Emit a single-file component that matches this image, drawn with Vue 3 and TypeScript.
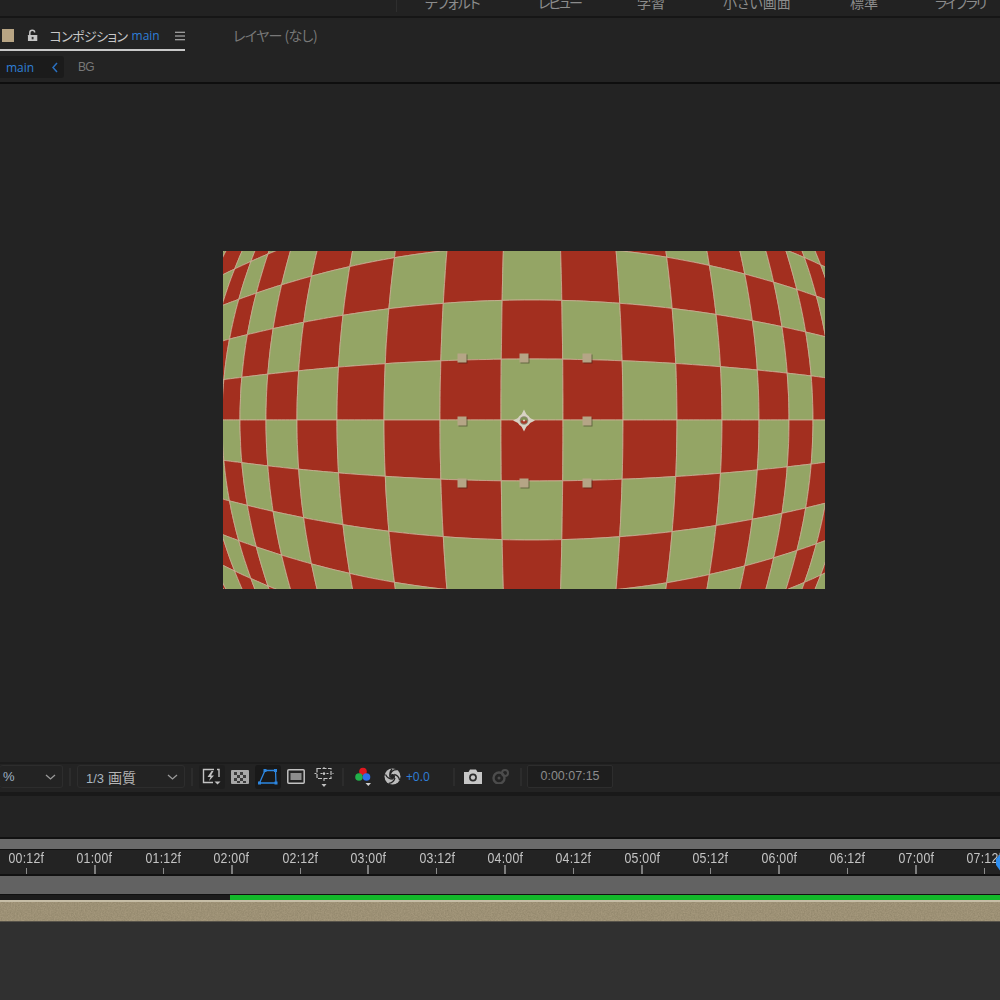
<template>
  <div class="app">
    <div class="workspaces">
      <div
        v-for="t in workspaces"
        :key="t.label"
        class="ws-item"
        :style="{ width: t.w + 'px', letterSpacing: t.ls + 'px' }"
      >{{ t.label }}</div>
    </div>
    <div class="rule"></div>

    <div class="tabs">
      <div class="tab active">
        <span class="swatch"></span>
        <svg class="lock" width="12" height="13" viewBox="0 0 12 13">
          <path d="M3 6V3.600C3 2 4.200 1 5.600 1S8.200 2 8.200 3.400" fill="none" stroke="#c4c4c4" stroke-width="1.600" />
          <rect x="1" y="6" width="10" height="6.500" rx="0.500" fill="#c4c4c4" />
          <rect x="5" y="8" width="2" height="2.600" fill="#333" />
        </svg>
        <span class="tab-name">コンポジション</span>
        <span class="tab-comp">main</span>
        <svg class="burger" width="11" height="10" viewBox="0 0 11 10">
          <path d="M0 1h11M0 5h11M0 9h11" stroke="#c4c4c4" stroke-width="1.300" />
        </svg>
      </div>
      <div class="tab-layer">レイヤー (なし)</div>
    </div>

    <div class="crumbs">
      <div class="crumb-box">
        <span class="crumb-main">main</span>
        <svg width="6" height="11" viewBox="0 0 6 11">
          <path d="M5 1 1 5.500 5 10" fill="none" stroke="#2a70c0" stroke-width="1.500" />
        </svg>
      </div>
      <span class="crumb-bg">BG</span>
    </div>
    <div class="rule thin"></div>

    <div class="viewer">
      <svg class="comp" width="602" height="338" viewBox="223 251 602 338">
        <g class="soft">
          <polygon
            v-for="c in cells"
            :key="c.id"
            :points="c.points"
            :fill="c.fill"
            stroke="#cdb095"
            stroke-width="0.800"
          />
        </g>
        <rect
          v-for="h in handles"
          :key="h[0] + '-' + h[1]"
          class="handle"
          :x="h[0] - 4.500"
          :y="h[1] - 4.500"
          width="9"
          height="9"
        />
        <g transform="translate(524 420.500)">
          <path d="M0-11 3-5H-3ZM0 11 3 5H-3ZM-11 0-5 3V-3ZM11 0 5 3V-3Z" fill="#d8d2c4" />
          <circle r="6.500" fill="#d8d2c4" />
          <circle r="4.300" fill="#8d8a74" />
          <path d="M-3.200 0a3.200 3.200 0 0 1 6.400 0Z" fill="#7f9352" />
          <path d="M-3.200 0a3.200 3.200 0 0 0 6.400 0Z" fill="#a83a28" />
          <circle r="1" fill="#e6ded0" />
        </g>
      </svg>
    </div>

    <div class="toolbar">
      <div class="select select-zoom">
        <span class="zoom-pct">%</span>
        <svg class="chev" width="11" height="6" viewBox="0 0 11 6"><path d="M1 1 5.500 5 10 1" fill="none" stroke="#9a9a9a" stroke-width="1.300" /></svg>
      </div>
      <span class="sep"></span>
      <div class="select select-quality">
        <span class="quality"><span class="frac">1/3</span> 画質</span>
        <svg class="chev" width="11" height="6" viewBox="0 0 11 6"><path d="M1 1 5.500 5 10 1" fill="none" stroke="#9a9a9a" stroke-width="1.300" /></svg>
      </div>
      <span class="sep"></span>

      <div class="btn btn-first">
        <svg width="20" height="18" viewBox="0 0 20 18">
          <path d="M12 1.500H1.500v13H11M17 9V1.500h-2" fill="none" stroke="#c2c2c2" stroke-width="1.400" />
          <path d="M9.500 3 5.500 9h3l-1.500 4 5-5.500H9L11.500 3Z" fill="#c2c2c2" />
          <path d="M12.500 13.500h6l-3 3Z" fill="#c2c2c2" />
        </svg>
      </div>
      <div class="btn">
        <svg width="18" height="14" viewBox="0 0 18 14">
          <rect width="18" height="14" rx="1" fill="#a8a8a8" />
          <path d="M3 2h3v3H3zM9 2h3v3H9zM6 5h3v3H6zM12 5h3v3h-3zM3 8h3v3H3zM9 8h3v3H9zM6 11h3v2H6zM12 11h3v2h-3z" fill="#3c3c3c" />
        </svg>
      </div>
      <div class="btn active">
        <svg width="20" height="18" viewBox="0 0 20 18">
          <path d="M7 2.500h10.500L18 15H1.500Z" fill="none" stroke="#2d86e0" stroke-width="1.300" />
          <path d="M5.500 1h3v3h-3zM16 1h3v3h-3zM16.500 13.500h3v3h-3zM0 13.500h3v3H0z" fill="#2d86e0" />
        </svg>
      </div>
      <div class="btn">
        <svg width="18" height="15" viewBox="0 0 18 15">
          <rect x="0.800" y="0.800" width="16.400" height="13.400" rx="1" fill="none" stroke="#c2c2c2" stroke-width="1.500" />
          <rect x="3.500" y="4" width="11" height="7" fill="#8e8e8e" />
        </svg>
      </div>
      <div class="btn">
        <svg width="20" height="22" viewBox="0 0 20 22">
          <path d="M3 2.500h14v10H3Z" fill="none" stroke="#c2c2c2" stroke-width="1.200" stroke-dasharray="4 1.500" />
          <path d="M10 1v14M0.500 7.500h19" stroke="#c2c2c2" stroke-width="1.100" stroke-dasharray="2 4" />
          <circle cx="10" cy="7.500" r="1.200" fill="#c2c2c2" />
          <path d="M7.500 18h5L10 21Z" fill="#c2c2c2" />
        </svg>
      </div>
      <span class="sep sep-a"></span>

      <div class="btn btn-rgb">
        <svg width="18" height="20" viewBox="0 0 18 20">
          <circle cx="8" cy="4.500" r="3.800" fill="#e0171f" />
          <circle cx="4" cy="10" r="3.800" fill="#22b04a" />
          <circle cx="11.500" cy="10" r="3.800" fill="#2f6fe8" />
          <path d="M10.500 16h5.500l-2.700 3Z" fill="#d0d0d0" />
        </svg>
      </div>
      <div class="btn">
        <svg width="17" height="17" viewBox="0 0 17 17">
          <circle cx="8.500" cy="8.500" r="8" fill="#bcbcbc" />
          <path d="M6.200 6.800C7 3.500 9.500 1.500 13 1.600M10.200 6.500C13 7 15 9.500 15.600 12M11 10C10 13 8 15 4.800 15.400M8.800 11.200C6 11.200 3 9.500 1.500 6.500M6 9.500C5.500 7 6 3.500 8 1" fill="none" stroke="#232323" stroke-width="1.300" />
          <circle cx="8.500" cy="8.500" r="2.500" fill="#232323" />
        </svg>
      </div>
      <span class="exposure">+0.0</span>
      <span class="sep sep-b"></span>

      <div class="btn btn-cam">
        <svg width="18" height="15" viewBox="0 0 18 15">
          <path d="M0 3h4.500L6 .5h6L13.500 3H18v12H0Z" fill="#c6c6c6" />
          <circle cx="9" cy="8.500" r="3.900" fill="#2a2a2a" />
          <circle cx="9" cy="8.500" r="2.200" fill="#c6c6c6" />
        </svg>
      </div>
      <div class="btn">
        <svg width="18" height="15" viewBox="0 0 18 15">
          <circle cx="7" cy="9" r="5.500" fill="none" stroke="#4c4c4c" stroke-width="2.400" />
          <circle cx="13" cy="4" r="3" fill="none" stroke="#4c4c4c" stroke-width="2" />
          <circle cx="7" cy="9" r="1.500" fill="#4c4c4c" />
        </svg>
      </div>
      <span class="sep sep-c"></span>
      <div class="timecode">0:00:07:15</div>
    </div>
    <div class="toolbar-foot"></div>

    <div class="spacer"></div>

    <div class="timeline">
      <div class="work-area"></div>
      <div class="ruler">
        <div v-for="m in marks" :key="m.label" class="mark">
          <span class="mark-label">{{ m.label }}</span>
          <span class="tick" :class="{ major: m.major }"></span>
        </div>
        <svg class="playhead" width="8" height="20" viewBox="0 0 8 20">
          <path d="M5 0 0 6v6l5 7h3V0Z" fill="#2f8ff0" />
        </svg>
      </div>
      <div class="nav-bar"></div>
      <div class="cache">
        <div class="cache-off"></div>
        <div class="cache-on"></div>
      </div>
      <div class="layer-bar">
        <svg class="grain" width="1000" height="19">
          <filter id="grain">
            <feTurbulence type="fractalNoise" baseFrequency="0.7" numOctaves="2" seed="4" />
            <feColorMatrix values="0 0 0 0 0.2  0 0 0 0 0.17  0 0 0 0 0.1  0 0 0 0.7 -0.15" />
          </filter>
          <rect width="1000" height="19" filter="url(#grain)" />
        </svg>
      </div>
    </div>
  </div>
</template>

<script setup lang="ts">
import { computed } from 'vue'

const workspaces = [
  { label: 'デフォルト', w: 114, ls: -1 },
  { label: 'レビュー', w: 99, ls: -2 },
  { label: '学習', w: 86, ls: 0 },
  { label: '小さい画面', w: 127, ls: 0 },
  { label: '標準', w: 85, ls: 0 },
  { label: 'ライブラリ', w: 100, ls: -2 },
]

// grid lines where they cross the middle of the picture, before the bulge
const xs = [160, 182, 205, 222, 240, 266, 297, 337, 384, 440, 501, 563, 623, 677, 722, 759, 789, 813, 833, 850, 865, 880]
const ys = [-318, -290, -258, -221, -174, -120, -61, 0, 61, 120, 174, 221, 258, 290, 318]
const CX = 532
const CY = 420
const MID_COL = xs.indexOf(501)
const MID_ROW = ys.indexOf(0)

function warp(x0: number, y0: number): [number, number] {
  const dx0 = x0 - CX
  const c = 0.075 + 0.04 * (Math.abs(dx0) / 330) ** 4
  let dx = dx0
  let dy = y0
  for (let k = 0; k < 3; k++) {
    dy = y0 * (1 - 0.34 * (dx / 309) ** 2)
    dx = dx0 * (1 - c * (dy / 169) ** 2)
  }
  return [CX + dx, CY + dy]
}

function edge(x1: number, y1: number, x2: number, y2: number): string[] {
  const pts: string[] = []
  for (let s = 0; s < 8; s++) {
    const t = s / 8
    const p = warp(x1 + (x2 - x1) * t, y1 + (y2 - y1) * t)
    pts.push(p[0].toFixed(1) + ',' + p[1].toFixed(1))
  }
  return pts
}

const cells = computed(() => {
  const out: { id: string; points: string; fill: string }[] = []
  for (let i = 0; i < xs.length - 1; i++) {
    for (let j = 0; j < ys.length - 1; j++) {
      const x1 = xs[i], x2 = xs[i + 1], y1 = ys[j], y2 = ys[j + 1]
      const points = [
        ...edge(x1, y1, x2, y1),
        ...edge(x2, y1, x2, y2),
        ...edge(x2, y2, x1, y2),
        ...edge(x1, y2, x1, y1),
      ].join(' ')
      const odd = Math.abs(i - MID_COL + (j - MID_ROW)) % 2 === 1
      out.push({ id: i + '-' + j, points, fill: odd ? '#94a565' : '#a32f1f' })
    }
  }
  return out
})

const handles = [
  [462, 358], [524, 358], [587, 358],
  [462, 421], [587, 421],
  [462, 483], [524, 483], [587, 483],
]

const marks = computed(() => {
  const out: { label: string; major: boolean }[] = []
  for (let n = 1; n <= 15; n++) {
    const sec = Math.floor(n / 2)
    const half = n % 2 === 1
    out.push({ label: '0' + sec + ':' + (half ? '12' : '00') + 'f', major: !half })
  }
  return out
})
</script>

<style>
html,
body {
  margin: 0;
  background: #232323;
}
</style>

<style scoped>
.app {
  width: 1000px;
  height: 1000px;
  overflow: hidden;
  display: flex;
  flex-direction: column;
  background: #232323;
  font-family: "Liberation Sans", "Noto Sans CJK JP", sans-serif;
}

.workspaces {
  height: 16px;
  flex: none;
  display: flex;
  padding-left: 396px;
  overflow: hidden;
  background: #222;
}

.ws-item {
  height: 20px;
  margin-top: -8px;
  flex: none;
  line-height: 20px;
  font-size: 14px;
  font-feature-settings: "palt";
  color: #8c8c8c;
  padding-left: 28px;
  box-sizing: border-box;
  font-family: "Noto Sans CJK JP", sans-serif;
  white-space: nowrap;
}

.ws-item:first-child {
  border-left: 1px solid #2e2e2e;
}

.rule {
  height: 2px;
  flex: none;
  background: #161616;
}

.rule.thin {
  background: #0e0e0e;
}

.tabs {
  height: 34px;
  flex: none;
  display: flex;
}

.tab {
  width: 185px;
  height: 33px;
  box-sizing: border-box;
  display: flex;
  align-items: center;
  padding: 4px 0 0 2px;
  border-bottom: 2px solid #c8c8c8;
}

.swatch {
  width: 13px;
  height: 13px;
  background: #b8a584;
}

.lock {
  margin-left: 13px;
}

.tab-name {
  width: 79px;
  margin-left: 11px;
  font-family: "Noto Sans CJK JP", sans-serif;
  font-size: 13px;
  letter-spacing: -0.6px;
  font-feature-settings: "palt";
  color: #c8c8c8;
  white-space: nowrap;
}

.tab-comp {
  margin-left: 4px;
  font-family: "Open Sans", sans-serif;
  font-size: 12px;
  color: #2f7fd8;
}

.burger {
  margin-left: 15px;
}

.tab-layer {
  margin-left: 48px;
  height: 33px;
  padding-top: 3px;
  box-sizing: border-box;
  line-height: 29px;
  font-family: "Noto Sans CJK JP", sans-serif;
  font-size: 14px;
  letter-spacing: -0.6px;
  font-feature-settings: "palt";
  color: #787878;
}

.crumbs {
  height: 30px;
  flex: none;
  display: flex;
  align-items: center;
}

.crumb-box {
  width: 64px;
  height: 22px;
  box-sizing: border-box;
  padding: 0 6px;
  background: #1b1b1b;
  border-radius: 0 3px 3px 0;
  display: flex;
  align-items: center;
  justify-content: space-between;
}

.crumb-main {
  font-family: "Open Sans", sans-serif;
  font-size: 12px;
  color: #2f7fd8;
}

.crumb-bg {
  margin-left: 14px;
  font-size: 12px;
  letter-spacing: -0.8px;
  color: #787878;
}

.viewer {
  height: 678px;
  flex: none;
  box-sizing: border-box;
  padding: 167px 0 0 223px;
}

.comp {
  display: block;
}

.soft {
  filter: blur(0.4px);
}

.handle {
  fill: #b5a586;
  filter: drop-shadow(1px 1px 0 rgba(40, 30, 20, 0.45));
}

.toolbar {
  height: 25px;
  padding-bottom: 3px;
  flex: none;
  display: flex;
  align-items: center;
  border-top: 2px solid #1c1c1c;
  background: #232323;
}

.toolbar-foot {
  height: 4px;
  flex: none;
  background: #191919;
}

.select {
  height: 23px;
  box-sizing: border-box;
  border: 1px solid #2d2d2d;
  border-radius: 3px;
  display: flex;
  align-items: center;
  justify-content: space-between;
  flex: none;
}

.select-zoom {
  width: 63px;
  padding: 0 6px 0 3px;
  border-left: none;
}

.select-quality {
  width: 108px;
  padding: 0 6px 0 8px;
}

.zoom-pct {
  font-size: 13px;
  color: #9fb2c4;
}

.quality {
  font-family: "Liberation Sans", "Noto Sans CJK JP", sans-serif;
  font-size: 14px;
  color: #b4b4b4;
  white-space: nowrap;
}

.frac {
  font-size: 13px;
  color: #a9b4bf;
}

.sep {
  width: 2px;
  height: 18px;
  margin: 0 6px;
  background: #2c2c2c;
  flex: none;
}

.sep-a {
  margin: 0 7px 0 3px;
}

.sep-b {
  margin: 0 5px 0 22px;
}

.sep-c {
  margin: 0 5px 0 4px;
}

.btn {
  width: 26px;
  height: 24px;
  flex: none;
  display: flex;
  align-items: center;
  justify-content: center;
  margin-right: 2px;
  border-radius: 3px;
}

.btn-first {
  background: #1e1e1e;
}

.btn.active {
  background: #191919;
}

.exposure {
  width: 25px;
  margin-left: -1px;
  font-family: "Open Sans", sans-serif;
  font-size: 12px;
  color: #2f7fd8;
  flex: none;
  white-space: nowrap;
}

.timecode {
  width: 86px;
  height: 23px;
  flex: none;
  box-sizing: border-box;
  border: 1px solid #2d2d2d;
  border-radius: 2px;
  background: #1e1e1e;
  text-align: center;
  line-height: 21px;
  font-size: 12.500px;
  color: #8c8c8c;
}

.spacer {
  height: 41px;
  flex: none;
}

.timeline {
  flex: 1;
  display: flex;
  flex-direction: column;
  background: #303030;
}

.work-area {
  height: 10px;
  flex: none;
  border-top: 2px solid #111;
  border-bottom: 1px solid #111;
  background: #6b6b6b;
}

.ruler {
  position: relative;
  height: 24px;
  flex: none;
  display: flex;
  margin-left: -8px;
  background: #232323;
  width: 1008px;
  overflow: hidden;
}

.mark {
  width: 68.460px;
  flex: none;
  display: flex;
  flex-direction: column;
  align-items: center;
  justify-content: space-between;
}

.mark-label {
  margin-top: 1px;
  font-size: 14px;
  line-height: 15px;
  letter-spacing: 0.3px;
  color: #c4c4c4;
  white-space: nowrap;
  transform: scaleX(0.88);
}

.tick {
  width: 1px;
  height: 6px;
  background: #8c8c8c;
}

.tick.major {
  width: 2px;
  height: 9px;
  margin-top: -3px;
  background: #7e7e7e;
}

.playhead {
  position: absolute;
  left: 1004px;
  top: 3px;
}

.nav-bar {
  height: 18px;
  flex: none;
  border-top: 2px solid #111;
  border-bottom: 1px solid #111;
  background: #626262;
}

.cache {
  height: 5px;
  flex: none;
  display: flex;
}

.cache-off {
  width: 230px;
  background: #1c1c1c;
}

.cache-on {
  flex: 1;
  background: #12b82a;
}

.layer-bar {
  height: 19px;
  flex: none;
  border-top: 2px solid #c6bda6;
  border-bottom: 1px solid #57534a;
  background: #a5987c;
}

.grain {
  display: block;
}
</style>
